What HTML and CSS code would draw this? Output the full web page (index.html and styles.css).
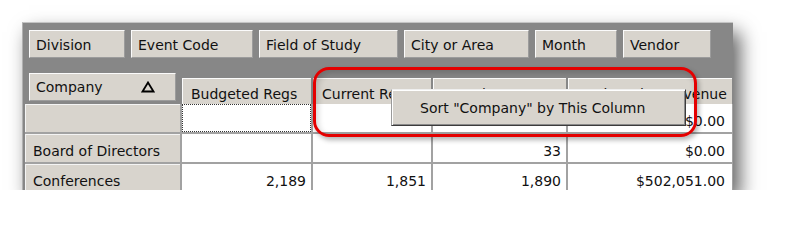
FILE: index.html
```html
<!DOCTYPE html>
<html lang="en">
<head>
    <meta charset="UTF-8">
    <title>Pivot Grid - Sort Menu</title>
    <link rel="stylesheet" href="styles.css">
</head>
<body>

    <div class="pivot">
        <div class="filter-bar">
            <div class="field-btn w-division">Division</div>
            <div class="field-btn w-event">Event Code</div>
            <div class="field-btn w-study">Field of Study</div>
            <div class="field-btn w-city">City or Area</div>
            <div class="field-btn w-month">Month</div>
            <div class="field-btn w-vendor">Vendor</div>
        </div>

        <div class="grid-head">
            <div class="row-field">
                <span>Company</span>
                <svg class="sort-arrow" width="14" height="12" viewBox="0 0 14 12">
                    <path d="M7 1.5 L12.5 10.5 L1.5 10.5 Z" fill="none" stroke="#000" stroke-width="1.8" stroke-linejoin="miter"/>
                </svg>
            </div>
            <div class="col-head">Budgeted Regs</div>
            <div class="col-head">Current Regs</div>
            <div class="col-head">Actual Regs</div>
            <div class="col-head">Registration Revenue</div>
        </div>

        <div class="grid-body">
            <div class="row-head"></div>
            <div class="cell focused"></div>
            <div class="cell"></div>
            <div class="cell"></div>
            <div class="cell last">$0.00</div>

            <div class="row-head">Board of Directors</div>
            <div class="cell"></div>
            <div class="cell"></div>
            <div class="cell">33</div>
            <div class="cell last">$0.00</div>

            <div class="row-head">Conferences</div>
            <div class="cell">2,189</div>
            <div class="cell">1,851</div>
            <div class="cell">1,890</div>
            <div class="cell last">$502,051.00</div>
        </div>

        <!-- popup menu + callout drawn over the grid -->
        <div class="context-menu">Sort "Company" by This Column</div>
        <div class="callout"></div>
    </div>

</body>
</html>
```

FILE: styles.css
```css
body { margin: 0; background: #fff; font-family: 'DejaVu Sans', sans-serif; font-size: 14px; color: #111; }

.pivot { position: relative; box-sizing: border-box; width: 711px; height: 168px; margin: 22px 0 0 22px; padding: 7px 0 0 2px; background: #878787; border-top: 1px solid #c4c4c4; border-left: 1px solid #b0b0b0; overflow: hidden; box-shadow: 7px 10px 18px rgba(0,0,0,0.62); }

.filter-bar { display: flex; gap: 6px; padding-left: 4px; }
.field-btn { box-sizing: border-box; height: 28px; line-height: 28px; padding-left: 6px; background: #d8d4cd; border: 1px solid; border-color: #fbfbfb #9c9c9c #9c9c9c #fbfbfb; white-space: nowrap; }
.w-division { width: 96px; }
.w-event { width: 122px; }
.w-study { width: 139px; }
.w-city { width: 125px; }
.w-month { width: 82px; }
.w-vendor { width: 88px; }

.grid-head, .grid-body { display: grid; grid-template-columns: 155px 129px 118px 133px 164px; column-gap: 2px; }
.grid-head { margin-top: 15px; height: 31px; }
.row-field { box-sizing: border-box; display: flex; align-items: center; justify-content: space-between; width: 147px; height: 28px; margin-left: 4px; padding: 0 20px 0 6px; background: #d8d4cd; border: 1px solid; border-color: #fbfbfb #9c9c9c #9c9c9c #fbfbfb; }
.sort-arrow { display: block; }
.col-head { box-sizing: border-box; align-self: end; height: 26px; padding: 5px 0 0 8px; line-height: 20px; background: #d8d4cd; border-top: 1px solid #fbfbfb; border-left: 1px solid #fbfbfb; white-space: nowrap; overflow: hidden; }

.grid-body { grid-auto-rows: 28px; row-gap: 2px; background: #a2a2a2; }
.row-head { box-sizing: border-box; padding: 4px 0 0 7px; line-height: 25px; background: #d8d4cd; border-top: 1px solid #f4f4f4; border-left: 1px solid #f4f4f4; white-space: nowrap; }
.cell { box-sizing: border-box; padding: 4px 5px 0 0; line-height: 26px; text-align: right; background: #fff; }
.cell.last { padding-right: 7px; }
.cell.focused { border: 1px dotted #333; }

.context-menu { position: absolute; left: 368px; top: 66px; box-sizing: border-box; width: 295px; height: 37px; padding: 1px 0 0 28px; line-height: 35px; background: #d8d4cd; border: 1px solid; border-color: #efefef #3c3c3c #3c3c3c #9a9a9a; box-shadow: inset 1px 1px #fff, inset -1px -1px #8a8a8a; white-space: nowrap; }

.callout { position: absolute; left: 290px; top: 44px; box-sizing: border-box; width: 384px; height: 70px; border: 3px solid #e40000; border-radius: 16px; box-shadow: 2px 3px 5px rgba(0,0,0,0.3), inset 2px 3px 6px rgba(0,0,0,0.18); }
```
